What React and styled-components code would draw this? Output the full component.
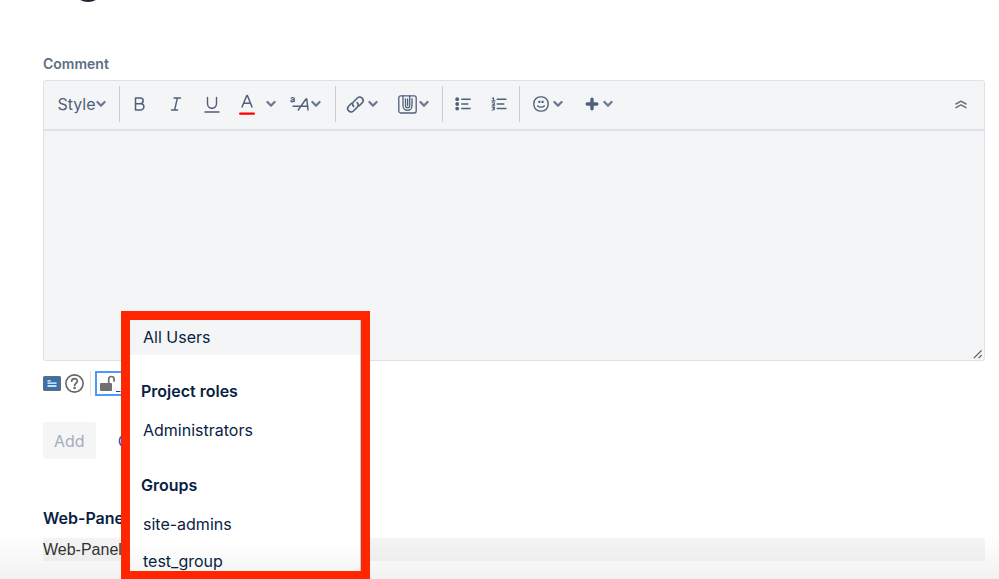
import React, { useState } from "react";
import styled, { createGlobalStyle } from "styled-components";

const ink = "#091e42";
const slate = "#505f79";
const line = "#dfe1e6";
const panel = "#f4f5f7";
const alertRed = "#ff2600";

const GlobalStyle = createGlobalStyle`
  * { box-sizing: border-box; }
  html, body {
    margin: 0;
    overflow: hidden;
    background: #fff;
    color: ${ink};
    font-family: Inter, "Liberation Sans", sans-serif;
    font-size: 16px;
  }
  button, textarea { font-family: inherit; }
`;

const Page = styled.main`
  padding: 0 14px 0 43px;
  height: 100vh;
  overflow: hidden;
`;

const Avatar = styled.div`
  width: 32px;
  height: 32px;
  margin: -30px 0 0 29px;
  border-radius: 50%;
  background: linear-gradient(90deg, #3b2a5c, #1b2430 50%, #12261f);
`;

const Label = styled.label`
  display: block;
  margin-top: 52px;
  color: #5e6c84;
  font-size: 14px;
  font-weight: 600;
  line-height: 20px;
`;

const Editor = styled.div`
  position: relative;
  margin-top: 6px;
  border: 1px solid ${line};
  border-radius: 3px;
  background: ${panel};
`;

const Toolbar = styled.div`
  display: flex;
  align-items: center;
  height: 50px;
  padding-bottom: 2px;
  border-bottom: 2px solid ${line};
`;

const Group = styled.div`
  display: flex;
  align-items: center;
  height: 36px;
  padding: 0 2px;
  border-right: ${(props) => (props.$last ? "none" : "1px solid #c9ccd2")};
`;

const Tool = styled.button`
  display: flex;
  align-items: center;
  justify-content: center;
  gap: ${(props) => props.$gap || 0}px;
  width: ${(props) => props.$width || 36}px;
  height: 34px;
  padding: 0;
  border: 0;
  background: none;
  color: ${slate};
  font-size: 16px;
  white-space: nowrap;
`;

const Collapse = styled(Tool)`
  margin-left: auto;
  margin-right: 5px;
  color: #6b6e76;
`;

const TextBox = styled.textarea`
  display: block;
  width: 100%;
  height: 229px;
  padding: 8px 12px;
  border: 0;
  outline: 0;
  resize: none;
  background: none;
  color: ${ink};
  font-size: 16px;
`;

const Grip = styled.svg`
  position: absolute;
  right: 1px;
  bottom: 1px;
`;

const Options = styled.div`
  display: flex;
  align-items: center;
  margin-top: 10px;
  height: 25px;
`;

const IconButton = styled.button`
  display: flex;
  padding: 0;
  margin-right: ${(props) => props.$space}px;
  border: 0;
  background: none;
`;

const Divider = styled.span`
  width: 1px;
  height: 25px;
  margin-right: 4px;
  background: ${line};
`;

const Security = styled.div`
  position: relative;
`;

const LockButton = styled.button`
  display: flex;
  gap: 1px;
  align-items: center;
  height: 25px;
  padding: 0 3px;
  border: 2px solid #4c9aff;
  background: #fff;
  color: #0052cc;
  font-size: 16px;
  line-height: 20px;
`;

const Menu = styled.div`
  position: absolute;
  z-index: 2;
  top: -60px;
  left: 26px;
  width: 249px;
  border: 9px solid ${alertRed};
`;

const MenuList = styled.div`
  max-height: 251px;
  border-right: 1px solid #c5cbd6;
  overflow: hidden;
  background: linear-gradient(#fff 88%, #f6f6f6);
`;

const MenuItem = styled.button`
  display: block;
  width: 100%;
  height: ${(props) => (props.$active ? 35 : 37)}px;
  padding: 0 13px;
  border: 0;
  background: ${(props) => (props.$active ? panel : "none")};
  color: ${ink};
  font-size: 16px;
  line-height: 35px;
  text-align: left;
`;

const MenuTitle = styled.h3`
  margin: 0;
  padding: 26px 11px 11px;
  font-size: 16px;
  font-weight: 600;
  line-height: 20px;
`;

const Actions = styled.div`
  display: flex;
  align-items: center;
  gap: 22px;
  margin-top: 26px;
`;

const AddButton = styled.button`
  height: 37px;
  padding: 0 11px;
  border: 0;
  border-radius: 3px;
  background: ${panel};
  color: #a5adba;
  font-size: 16px;
`;

const Cancel = styled.a`
  color: #0052cc;
  text-decoration: none;
`;

const PanelTitle = styled.h2`
  margin: 49px 0 0;
  font-size: 16px;
  font-weight: 600;
  line-height: 20px;
`;

const PanelText = styled.p`
  margin: 10px 0 0;
  background: #f5f5f5;
  color: #333;
  font-family: "Liberation Sans", sans-serif;
  font-size: 16px;
  line-height: 23px;
`;

const Fade = styled.div`
  position: fixed;
  right: 0;
  bottom: 0;
  left: 0;
  height: 44px;
  background: linear-gradient(rgba(0, 0, 0, 0), rgba(0, 0, 0, 0.05));
  pointer-events: none;
`;

const Chevron = () => (
  <svg width="10" height="8" viewBox="0 0 10 8" fill="none" stroke="#6b7890" strokeWidth="2.2" strokeLinecap="round" strokeLinejoin="round">
    <path d="M1.4 2 5 5.6 8.6 2" />
  </svg>
);

const stroke = {
  fill: "none",
  stroke: slate,
  strokeWidth: 1.5,
  strokeLinecap: "round",
  strokeLinejoin: "round",
};

const BoldIcon = () => (
  <svg width="12" height="14" viewBox="0 0 12 14" {...stroke}>
    <path d="M1.5 1h4.8a2.8 2.8 0 0 1 0 5.7H1.5zM1.5 6.7h5.3a3.1 3.1 0 0 1 0 6.2H1.5z" />
  </svg>
);

const ItalicIcon = () => (
  <svg width="12" height="14" viewBox="0 0 12 14" {...stroke} strokeWidth="1.4">
    <path d="M4 1h6.5M1.5 13h6M7.4 1 4.6 13" />
  </svg>
);

const UnderlineIcon = () => (
  <svg width="16" height="17" viewBox="0 0 16 17" {...stroke} strokeWidth="1.4">
    <path d="M3.5 1.5v6.2a4.5 4.5 0 0 0 9 0V1.5M1 16h14" />
  </svg>
);

const ColorIcon = () => (
  <svg width="16" height="21" viewBox="0 0 16 21" {...stroke}>
    <path d="M3 13 7.8 1.5h.6L13 13M4.6 9.3h7" />
    <path d="M1.2 19.6h13.6" stroke="#ff0000" strokeWidth="2.4" />
  </svg>
);

const MoreTextIcon = () => (
  <svg width="20" height="16" viewBox="0 0 20 16" {...stroke} strokeWidth="1.4">
    <path d="M1.2 2.2c1-.9 3.1-.7 3.1.8v2.6M4.3 3.7C2.2 3.5.9 4.1.9 5c0 1.2 2.4 1.2 3.4-.3" strokeWidth="1.2" />
    <path d="M8.2 14 16 3h.8L18 14M3 10.2h15" />
  </svg>
);

const LinkIcon = () => (
  <svg width="19" height="19" viewBox="0 0 19 19" {...stroke} strokeWidth="1.6">
    <path d="M7.6 11.4a3.3 3.3 0 0 1 0-4.6l3.8-3.8a3.4 3.4 0 0 1 4.8 4.8l-2.9 2.9" />
    <path d="M11.2 7.6a3.3 3.3 0 0 1 0 4.6L7.4 16a3.4 3.4 0 0 1-4.8-4.8l2.9-2.9" />
  </svg>
);

const ClipIcon = () => (
  <svg width="19" height="19" viewBox="0 0 19 19" {...stroke} strokeWidth="1.3">
    <rect x=".8" y=".8" width="17.4" height="17.2" rx="2" />
    <path d="M5 1v9.8a4.5 4.5 0 0 0 9 0V3.7M7.5 4v6.8a2.1 2.1 0 0 0 4.2 0V1M9.6 4v6.5" />
  </svg>
);

const BulletIcon = () => (
  <svg width="16" height="14" viewBox="0 0 16 14" {...stroke}>
    <path d="M6.8 2.2h8.3M6.8 7h6M6.8 11.6h8.3" />
    <g fill={slate} stroke="none">
      <circle cx="2.2" cy="2.2" r="1.9" />
      <circle cx="2.2" cy="7" r="1.9" />
      <circle cx="2.2" cy="11.6" r="1.9" />
    </g>
  </svg>
);

const NumberIcon = () => (
  <svg width="16" height="14" viewBox="0 0 16 14" {...stroke}>
    <path d="M6.2 2.2h8.7M6.2 7h6.6M6.2 11.6h8.7" />
    <path d="M1.2 1.2 2.5.8v3M1 3.9h3M1.1 5.8h2.3v1.2L1.2 8.3h2.5M1 10.1h2.6L2.4 11.4c1.8 0 1.6 1.8-1.3 1.6" strokeWidth="1.1" />
  </svg>
);

const SmileIcon = () => (
  <svg width="16" height="16" viewBox="0 0 16 16" {...stroke} strokeWidth="1.4">
    <rect x=".9" y=".9" width="14.2" height="14.2" rx="6.4" />
    <path d="M4.7 9.8c1.2 1.7 5.4 1.7 6.6 0" />
    <path d="M6.4 4.8v2.2M9.6 4.8v2.2" strokeWidth="2" strokeLinecap="butt" />
  </svg>
);

const PlusIcon = () => (
  <svg width="14" height="14" viewBox="0 0 14 14" {...stroke} strokeWidth="3.4">
    <path d="M7 2.2v9.6M2.2 7h9.6" />
  </svg>
);

const CollapseIcon = () => (
  <svg width="12" height="9" viewBox="0 0 12 9" fill="none" stroke="currentColor" strokeWidth="1.5" strokeLinecap="round" strokeLinejoin="round">
    <path d="M1 4 6 1.2 11 4M1 7.7l5-2.8 5 2.8" />
  </svg>
);

const PreviewIcon = () => (
  <svg width="18" height="15" viewBox="0 0 18 15">
    <rect x=".6" y=".6" width="16.8" height="13.8" rx="1" fill="#3572b0" stroke="#6b6b6b" strokeWidth="1.2" />
    <path d="M4.5 4.8h3.2M4.5 7.2h9M4.5 10h9" stroke="#fff" strokeWidth="1.3" />
  </svg>
);

const HelpIcon = () => (
  <svg width="19" height="19" viewBox="0 0 19 19" fill="none" stroke="#666" strokeWidth="1.6" strokeLinecap="round">
    <circle cx="9.5" cy="9.5" r="8.6" />
    <path d="M6.7 7.2c.2-3.6 5.8-3.4 5.7.1 0 2-2.8 2-2.8 4.2" strokeWidth="1.7" />
    <circle cx="9.6" cy="14" r=".5" fill="#666" />
  </svg>
);

const UnlockIcon = () => (
  <svg width="15" height="17" viewBox="0 0 15 17">
    <path d="M8.7 8V4.2a2.7 2.7 0 0 1 5.4 0v2.5" fill="none" stroke="#707070" strokeWidth="1.7" />
    <rect x="0" y="8" width="12" height="8" rx="1" fill="#707070" />
  </svg>
);

const roles = ["Administrators"];
const groups = ["site-admins", "test_group"];

const LevelMenu = ({ level, pick }) => {
  const item = (name) => (
    <MenuItem
      key={name}
      type="button"
      $active={level === name}
      onClick={() => pick(name)}
    >
      {name}
    </MenuItem>
  );

  return (
    <Menu>
      <MenuList>
        {item("All Users")}
        <MenuTitle>Project roles</MenuTitle>
        {roles.map(item)}
        <MenuTitle>Groups</MenuTitle>
        {groups.map(item)}
      </MenuList>
    </Menu>
  );
};

const App = () => {
  const [comment, setComment] = useState("");
  const [level, setLevel] = useState("All Users");

  return (
    <Page>
      <GlobalStyle />
      <Avatar />
      <Label htmlFor="comment">Comment</Label>
      <Editor>
        <Toolbar>
          <Group>
            <Tool $width={71}>
              Style
              <Chevron />
            </Tool>
          </Group>
          <Group>
            <Tool aria-label="Bold"><BoldIcon /></Tool>
            <Tool aria-label="Italic"><ItalicIcon /></Tool>
            <Tool aria-label="Underline"><UnderlineIcon /></Tool>
            <Tool aria-label="Text colour" $width={34}><ColorIcon /></Tool>
            <Tool aria-label="More colours" $width={14}><Chevron /></Tool>
            <Tool aria-label="More formatting" $width={55} $gap={1}>
              <MoreTextIcon />
              <Chevron />
            </Tool>
          </Group>
          <Group>
            <Tool aria-label="Link" $width={48} $gap={3}>
              <LinkIcon />
              <Chevron />
            </Tool>
            <Tool aria-label="Attachment" $width={54} $gap={2}>
              <ClipIcon />
              <Chevron />
            </Tool>
          </Group>
          <Group>
            <Tool aria-label="Bullet list"><BulletIcon /></Tool>
            <Tool aria-label="Numbered list"><NumberIcon /></Tool>
          </Group>
          <Group $last>
            <Tool aria-label="Emoji" $width={51} $gap={4}>
              <SmileIcon />
              <Chevron />
            </Tool>
            <Tool aria-label="Insert" $width={52} $gap={4}>
              <PlusIcon />
              <Chevron />
            </Tool>
          </Group>
          <Collapse aria-label="Collapse toolbar"><CollapseIcon /></Collapse>
        </Toolbar>
        <TextBox
          id="comment"
          value={comment}
          onChange={(e) => setComment(e.target.value)}
        />
        <Grip width="10" height="10" viewBox="0 0 10 10" stroke="#555" strokeWidth="1.2">
          <path d="M.8 9.2 8.6 1.4M5.6 9.2l3-3" />
        </Grip>
      </Editor>
      <Options>
        <IconButton aria-label="Preview" $space={4}><PreviewIcon /></IconButton>
        <IconButton aria-label="Help" $space={6}><HelpIcon /></IconButton>
        <Divider />
        <Security>
          <LockButton aria-label="Viewable by">
            <UnlockIcon />
            <u>&nbsp;</u>
            <Chevron />
          </LockButton>
          <LevelMenu level={level} pick={setLevel} />
        </Security>
      </Options>
      <Actions>
        <AddButton disabled>Add</AddButton>
        <Cancel href="#cancel">Cancel</Cancel>
      </Actions>
      <PanelTitle>Web-Panel</PanelTitle>
      <PanelText>Web-Panel</PanelText>
      <Fade />
    </Page>
  );
};

export default App;
